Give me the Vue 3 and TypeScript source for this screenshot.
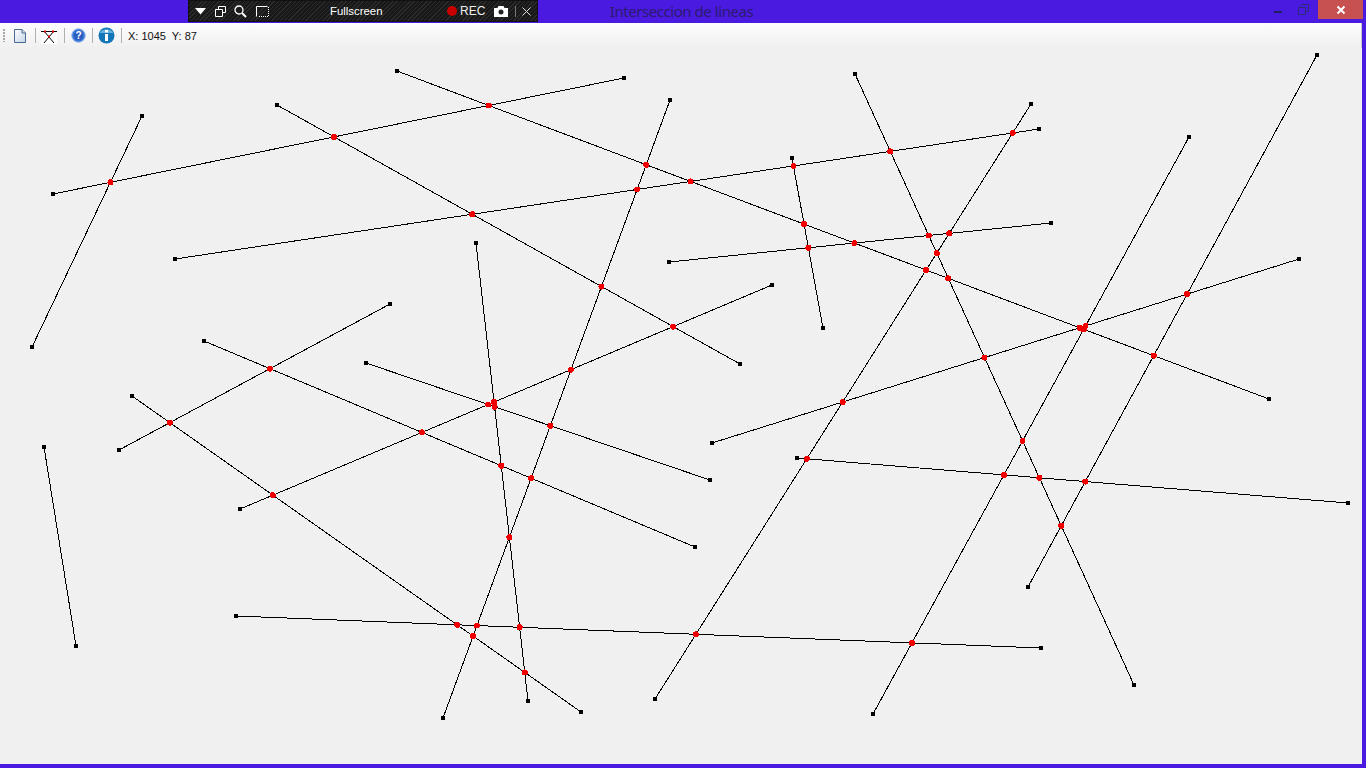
<script setup lang="ts">
type Seg = [number, number, number, number];
const segs: Seg[] = [
  [142,116,32,347],[53,194,624,78],[277,105,740,364],[397,71,1269,399],
  [175,259,1039,129],[670,100,443,718],[792,158,823,328],[669,262,1051,223],
  [855,74,1134,685],[1031,104,655,699],[1189,137,873,714],[1317,55,1028,587],
  [1299,259,712,443],[797,458,1348,503],[476,243,528,701],[772,285,240,509],
  [390,304,119,450],[204,341,695,547],[366,363,710,480],[132,396,581,712],
  [236,616,1041,648],[44,447,76,646],
];
const points: { x: number; y: number }[] = [];
segs.forEach((a, i) => {
  for (let j = i + 1; j < segs.length; j++) {
    const b = segs[j];
    const dax = a[2] - a[0], day = a[3] - a[1], dbx = b[2] - b[0], dby = b[3] - b[1];
    const d = dax * dby - day * dbx;
    if (d === 0) continue;
    const t = ((b[0] - a[0]) * dby - (b[1] - a[1]) * dbx) / d;
    const u = ((b[0] - a[0]) * day - (b[1] - a[1]) * dax) / d;
    if (t >= 0 && t <= 1 && u >= 0 && u <= 1) points.push({ x: a[0] + t * dax, y: a[1] + t * day });
  }
});
</script>

<template>
  <div class="window">
    <header class="titlebar">
      <span class="title">Interseccion de lineas</span>
      <div class="caption">
        <span class="min"></span>
        <svg class="restore" width="11" height="11" viewBox="0 0 11 11"><path d="M3.5 2.5V.5h7v7H8M.5 3.5h7v7h-7z" fill="none" stroke="#2f2a78"/></svg>
        <span class="close"><svg width="10" height="10" viewBox="0 0 10 10"><path d="M1.5 1.5l7 7M8.5 1.5l-7 7" stroke="#fff" stroke-width="2"/></svg></span>
      </div>
      <div class="recorder">
        <svg class="r-arrow" width="12" height="7" viewBox="0 0 12 7"><path d="M0 0h11L5.500 6.500z" fill="#fff"/></svg>
        <svg class="r-win" width="11" height="11" viewBox="0 0 11 11"><path d="M3.500 3V.5h7v6H8M.5 3.500h7v7h-7z" fill="none" stroke="#fff"/></svg>
        <svg class="r-zoom" width="13" height="13" viewBox="0 0 13 13"><circle cx="5" cy="5" r="4" fill="none" stroke="#fff" stroke-width="1.300"/><path d="M8 8l4 4" stroke="#fff" stroke-width="2"/></svg>
        <svg class="r-rect" width="13" height="11" viewBox="0 0 13 11"><path d="M.5 10.500V.5h11" fill="none" stroke="#fff"/><path d="M12.500 1v9.500H2" fill="none" stroke="#fff" stroke-dasharray="1 1"/></svg>
        <span class="r-label">Fullscreen</span>
        <span class="r-dot"></span>
        <span class="r-rec">REC</span>
        <svg class="r-cam" width="14" height="11" viewBox="0 0 14 11"><path d="M0 2h3.500l1-2h5l1 2H14v9H0z" fill="#fff"/><circle cx="7" cy="6" r="2.500" fill="#222"/></svg>
        <span class="r-sep"></span>
        <svg class="r-x" width="9" height="9" viewBox="0 0 9 9"><path d="M.5.500l8 8M8.500.500l-8 8" stroke="#ddd"/></svg>
      </div>
    </header>

    <div class="client">
      <div class="toolbar">
        <span class="grip"></span>
        <svg class="t-new" width="12" height="14" viewBox="0 0 12 14"><defs><linearGradient id="pg" x1="0" y1="0" x2="1" y2="1"><stop offset="0" stop-color="#ffffff"/><stop offset="1" stop-color="#c4d4e8"/></linearGradient></defs><path d="M.5.500h7.500l3.500 3.500v9.500H.5z" fill="url(#pg)" stroke="#4a6a92"/><path d="M8 .5V4h3.500" fill="#cfdcea" stroke="#4a6a92"/></svg>
        <span class="sep"></span>
        <svg class="t-lines" width="16" height="16" viewBox="0 0 16 16"><rect width="16" height="16" fill="#fff"/><path d="M0 3.500h16M3 3l10 12M13 3L3 15" stroke="#000" fill="none"/><rect x="3" y="2.500" width="2" height="2" fill="#d00"/><rect x="11" y="2.500" width="2" height="2" fill="#d00"/><rect x="7" y="7.500" width="2" height="2" fill="#d00"/></svg>
        <span class="sep"></span>
        <svg class="t-help" width="15" height="15" viewBox="0 0 15 15"><circle cx="7.500" cy="7.500" r="6.800" fill="#3d78d8" stroke="#9cbcec"/><circle cx="7.500" cy="7.500" r="4.800" fill="#2a5cc0"/><text x="7.500" y="11" class="glyph-q">?</text></svg>
        <span class="sep"></span>
        <svg class="t-info" width="17" height="17" viewBox="0 0 17 17"><circle cx="8.500" cy="8.500" r="8" fill="#1276b8"/><path d="M1.500 6a7.500 6 0 0 1 14 0z" fill="#62b0de"/><rect x="7" y="3" width="3" height="2.500" fill="#fff"/><rect x="7" y="7" width="3" height="7" fill="#fff"/></svg>
        <span class="sep"></span>
        <span class="coords">X: 1045&nbsp; Y: 87</span>
      </div>

      <svg class="canvas" width="1362" height="716" viewBox="0 48 1362 716">
        <g class="lines">
          <line v-for="(s, i) in segs" :key="i" :x1="s[0]" :y1="s[1]" :x2="s[2]" :y2="s[3]" />
        </g>
        <g>
          <template v-for="(s, i) in segs" :key="i">
            <rect :x="s[0] - 2" :y="s[1] - 2" width="4" height="4" />
            <rect :x="s[2] - 2" :y="s[3] - 2" width="4" height="4" />
          </template>
        </g>
        <circle class="dot" v-for="(p, i) in points" :key="i" :cx="p.x" :cy="p.y" r="3" fill="#f00000" />
      </svg>
    </div>
    <div class="bottom"></div>
  </div>
</template>

<style>
html, body { margin: 0; overflow: hidden; }
</style>

<style scoped>
.window {
  width: 1366px;
  height: 768px;
  display: flex;
  flex-direction: column;
  background: #4a1ae0;
  position: relative;
  overflow: hidden;
}
.titlebar {
  height: 23px;
  flex: none;
  display: flex;
  justify-content: center;
  position: relative;
}
.title {
  margin-top: 2px;
  margin-left: -3px;
  font: 15px/19px "Noto Sans", "Open Sans", sans-serif;
  letter-spacing: -0.45px;
  color: #2b1b6e;
}
.caption { position: absolute; top: 0; right: 3px; display: flex; }
.min { position: absolute; right: 81px; top: 11px; width: 8px; height: 2px; background: #241e60; }
.restore { position: absolute; right: 54px; top: 4px; }
.close {
  width: 45px;
  height: 19px;
  background: #c75050;
  display: flex;
  align-items: center;
  justify-content: center;
}
.recorder {
  position: absolute;
  left: 188px;
  top: 0;
  width: 350px;
  height: 22px;
  box-sizing: border-box;
  border: 1px solid #111;
  display: flex;
  align-items: center;
  color: #fff;
  background: repeating-linear-gradient(135deg, #2b2b2b 0 1px, #181818 1px 3px);
}
.r-arrow { margin-left: 6px; }
.r-win { margin-left: 8px; }
.r-zoom { margin-left: 8px; }
.r-rect { margin-left: 9px; }
.r-label {
  position: absolute;
  left: 141px;
  font: 11.4px/14px "Liberation Sans", sans-serif;
}
.r-dot {
  position: absolute;
  left: 258px;
  width: 10px;
  height: 10px;
  border-radius: 50%;
  background: #c80000;
}
.r-rec {
  position: absolute;
  left: 271px;
  font: 12px/14px "Liberation Sans", sans-serif;
  color: #eee;
}
.r-cam { position: absolute; left: 305px; }
.r-sep { position: absolute; left: 326px; width: 1px; height: 11px; background: #777; }
.r-x { position: absolute; left: 333px; }

.client { width: 1362px; flex: none; height: 741px; background: #f0f0f0; display: flex; flex-direction: column; }
.toolbar {
  height: 25px;
  flex: none;
  display: flex;
  align-items: center;
  box-sizing: border-box;
  border-right: 1px solid #c8c8c8;
  background: linear-gradient(#fdfdfd, #f0f0f0);
  font: 11px/14px "Liberation Sans", sans-serif;
  color: #111;
}
.grip {
  width: 2px;
  height: 13px;
  margin-left: 3px;
  background: repeating-linear-gradient(#a8a8a8 0 2px, transparent 2px 3px);
}
.t-new { margin-left: 9px; }
.sep { width: 1px; height: 15px; background: #b0b0b0; }
.t-new + .sep { margin-left: 9px; }
.t-lines { margin-left: 5px; }
.t-lines + .sep { margin-left: 7px; }
.t-help { margin-left: 6px; }
.t-help + .sep { margin-left: 6px; }
.t-info { margin-left: 5px; }
.t-info + .sep { margin-left: 6px; }
.coords { margin-left: 6px; white-space: pre; }
.glyph-q { font: bold 10px "Liberation Sans", sans-serif; fill: #fff; text-anchor: middle; }
.canvas { display: block; flex: none; }
.lines line { stroke: #000; stroke-width: 1; shape-rendering: crispEdges; }
.dot { shape-rendering: crispEdges; }
.bottom { height: 4px; }
</style>
